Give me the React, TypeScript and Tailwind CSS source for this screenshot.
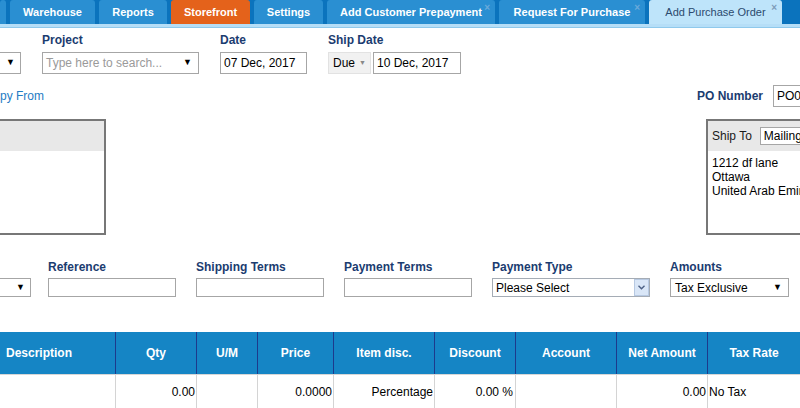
import React from "react";

const font = { fontFamily: '"Liberation Sans", Arial, sans-serif' };

interface Tab {
  label: string;
  width: string;
  kind: "normal" | "orange" | "active";
  close?: boolean;
}

const tabs: Tab[] = [
  { label: "", width: "w-[6px]", kind: "normal" },
  { label: "Warehouse", width: "w-[85px]", kind: "normal" },
  { label: "Reports", width: "w-[68px]", kind: "normal" },
  { label: "Storefront", width: "w-[79px]", kind: "orange" },
  { label: "Settings", width: "w-[69px]", kind: "normal" },
  { label: "Add Customer Prepayment", width: "w-[168px]", kind: "normal", close: true },
  { label: "Request For Purchase", width: "w-[146px]", kind: "normal", close: true },
  { label: "Add Purchase Order", width: "w-[133px]", kind: "active", close: true },
];

function Caret() {
  return <span className="text-[9px] text-black">▼</span>;
}

function Label({ children }: { children: React.ReactNode }) {
  return (
    <div className="h-[14px] text-[12px] font-bold leading-[14px] text-[#1b3c70]">
      {children}
    </div>
  );
}

export default function App() {
  return (
    <div className="h-[408px] w-[800px] overflow-hidden bg-white" style={font}>
      {/* Tab bar */}
      <div className="flex h-[24px] gap-[4px] bg-[#0b73bd]">
        {tabs.map((t, i) => (
          <div
            key={i}
            className={`relative flex shrink-0 items-center justify-center rounded-t-[3px] text-[11px] ${t.width} ${
              t.kind === "orange"
                ? "bg-[#e4621b] font-bold text-white"
                : t.kind === "active"
                ? "bg-[#bee4fa] text-[#2b4a6e]"
                : "bg-[#2a8fd2] font-bold text-white"
            }`}
          >
            {t.label}
            {t.close && (
              <span
                className={`absolute right-[5px] top-[3px] text-[10px] font-bold leading-[10px] ${
                  t.kind === "active" ? "text-[#7d9bb8]" : "text-[#6aaadb]"
                }`}
              >
                ×
              </span>
            )}
          </div>
        ))}
      </div>
      <div className="h-[3px] bg-[#b6def7]" />
      <div className="h-[1px] bg-[#8fc9ec]" />

      {/* Row 1 */}
      <div className="flex gap-[21px] pt-[5px] text-[12px]">
        <div className="flex flex-col gap-[5px]">
          <Label>&nbsp;</Label>
          <div className="flex h-[22px] w-[21px] items-center justify-end border-y border-r border-[#a6a6a6] pr-[5px]">
            <Caret />
          </div>
        </div>
        <div className="flex flex-col gap-[5px]">
          <Label>Project</Label>
          <div className="flex h-[22px] w-[157px] items-center justify-between border border-[#a6a6a6] px-[3px] pr-[6px]">
            <span className="text-[#9a9a9a]">Type here to search...</span>
            <Caret />
          </div>
        </div>
        <div className="flex flex-col gap-[5px]">
          <Label>Date</Label>
          <div className="flex h-[22px] w-[87px] items-center border border-[#a6a6a6] px-[3px] text-black">
            07 Dec, 2017
          </div>
        </div>
        <div className="flex flex-col gap-[5px]">
          <Label>Ship Date</Label>
          <div className="flex gap-[2px]">
            <div className="flex h-[22px] w-[43px] items-center gap-[4px] border border-[#e2e2e2] bg-[#f1f1f1] px-[4px] text-black">
              Due
              <span className="text-[7px] text-[#888]">▼</span>
            </div>
            <div className="flex h-[22px] w-[88px] items-center border border-[#a6a6a6] px-[3px] text-black">
              10 Dec, 2017
            </div>
          </div>
        </div>
      </div>

      {/* Row 2 */}
      <div className="flex h-[34px] items-center justify-between pt-[10px] text-[12px]">
        <span className="text-[#1f7cc4]">py From</span>
        <div className="flex items-center gap-[10px]">
          <span className="font-bold text-[#1b3c70]">PO Number</span>
          <div className="flex h-[22px] w-[27px] items-center border-y border-l border-[#a6a6a6] pl-[3px] text-black">
            PO0
          </div>
        </div>
      </div>

      {/* Row 3: address boxes */}
      <div className="mt-[11px] flex justify-between text-[12px]">
        <div className="h-[116px] w-[106px] border-y-2 border-r-2 border-[#777]">
          <div className="h-[30px] bg-[#e8e8e8]" />
        </div>
        <div className="h-[116px] w-[94px] overflow-hidden border-y-2 border-l-2 border-[#777]">
          <div className="flex h-[30px] items-center gap-[8px] whitespace-nowrap bg-[#e8e8e8] pl-[4px]">
            <span className="shrink-0 text-[#1a1a1a]">Ship To</span>
            <div className="flex h-[18px] w-[40px] shrink-0 items-center overflow-hidden border-y border-l border-[#a6a6a6] bg-white pl-[3px] text-black">
              Mailing
            </div>
          </div>
          <div className="pl-[4px] pt-[5px] leading-[14px] whitespace-nowrap text-black">
            <div>1212 df lane</div>
            <div>Ottawa</div>
            <div>United Arab Emirates</div>
          </div>
        </div>
      </div>

      {/* Row 4 */}
      <div className="mt-[25px] flex gap-[20px] text-[12px]">
        <div className="-mr-[3px] flex flex-col gap-[4px]">
          <Label>&nbsp;</Label>
          <div className="flex h-[19px] w-[31px] items-center justify-end border-y border-r border-[#a6a6a6] pr-[5px]">
            <Caret />
          </div>
        </div>
        {["Reference", "Shipping Terms", "Payment Terms"].map((l) => (
          <div key={l} className="flex flex-col gap-[4px]">
            <Label>{l}</Label>
            <div className="h-[19px] w-[128px] border border-[#a6a6a6]" />
          </div>
        ))}
        <div className="flex flex-col gap-[4px]">
          <Label>Payment Type</Label>
          <div className="flex h-[19px] w-[158px] items-center border border-[#a5acb5]">
            <span className="flex-1 pl-[3px] text-black">Please Select</span>
            <div className="flex h-[17px] w-[15px] items-center justify-center border border-[#b7c9e2] bg-[#d9e6f7]">
              <svg width="7" height="5" viewBox="0 0 7 5">
                <path d="M0.5 0.8 L3.5 3.8 L6.5 0.8" stroke="#4d6185" strokeWidth="1.4" fill="none" />
              </svg>
            </div>
          </div>
        </div>
        <div className="flex flex-col gap-[4px]">
          <Label>Amounts</Label>
          <div className="flex h-[19px] w-[119px] items-center justify-between border border-[#a6a6a6] pl-[4px] pr-[6px] text-black">
            Tax Exclusive
            <Caret />
          </div>
        </div>
      </div>

      {/* Table */}
      <div className="mt-[35px] text-[12px]">
        <div className="flex h-[42px] bg-[#1585c5] font-bold text-white">
          <div className="flex w-[116px] shrink-0 items-center border-r border-[#1d3a8c] pl-[6px]">Description</div>
          <div className="flex w-[81px] shrink-0 items-center justify-center border-r border-[#1d3a8c]">Qty</div>
          <div className="flex w-[61px] shrink-0 items-center justify-center border-r border-[#1d3a8c]">U/M</div>
          <div className="flex w-[76px] shrink-0 items-center justify-center border-r border-[#1d3a8c]">Price</div>
          <div className="flex w-[101px] shrink-0 items-center justify-center border-r border-[#1d3a8c]">Item disc.</div>
          <div className="flex w-[81px] shrink-0 items-center justify-center border-r border-[#1d3a8c]">Discount</div>
          <div className="flex w-[101px] shrink-0 items-center justify-center border-r border-[#1d3a8c]">Account</div>
          <div className="flex w-[91px] shrink-0 items-center justify-center border-r border-[#1d3a8c]">Net Amount</div>
          <div className="flex w-[92px] shrink-0 items-center justify-center">Tax Rate</div>
        </div>
        <div className="flex h-[34px] border-t border-[#d6d6d6] text-black">
          <div className="w-[116px] shrink-0 border-r border-[#d4d4d4]" />
          <div className="flex w-[81px] shrink-0 items-center justify-end border-r border-[#d4d4d4] pr-[1px]">0.00</div>
          <div className="w-[61px] shrink-0 border-r border-[#d4d4d4]" />
          <div className="flex w-[76px] shrink-0 items-center justify-end border-r border-[#d4d4d4] pr-[1px]">0.0000</div>
          <div className="flex w-[101px] shrink-0 items-center justify-end border-r border-[#d4d4d4] pr-[1px]">Percentage</div>
          <div className="flex w-[81px] shrink-0 items-center justify-end border-r border-[#d4d4d4] pr-[2px]">0.00 %</div>
          <div className="w-[101px] shrink-0 border-r border-[#d4d4d4]" />
          <div className="flex w-[91px] shrink-0 items-center justify-end border-r border-[#d4d4d4] pr-[1px]">0.00</div>
          <div className="flex w-[92px] shrink-0 items-center pl-[1px]">No Tax</div>
        </div>
      </div>
    </div>
  );
}
